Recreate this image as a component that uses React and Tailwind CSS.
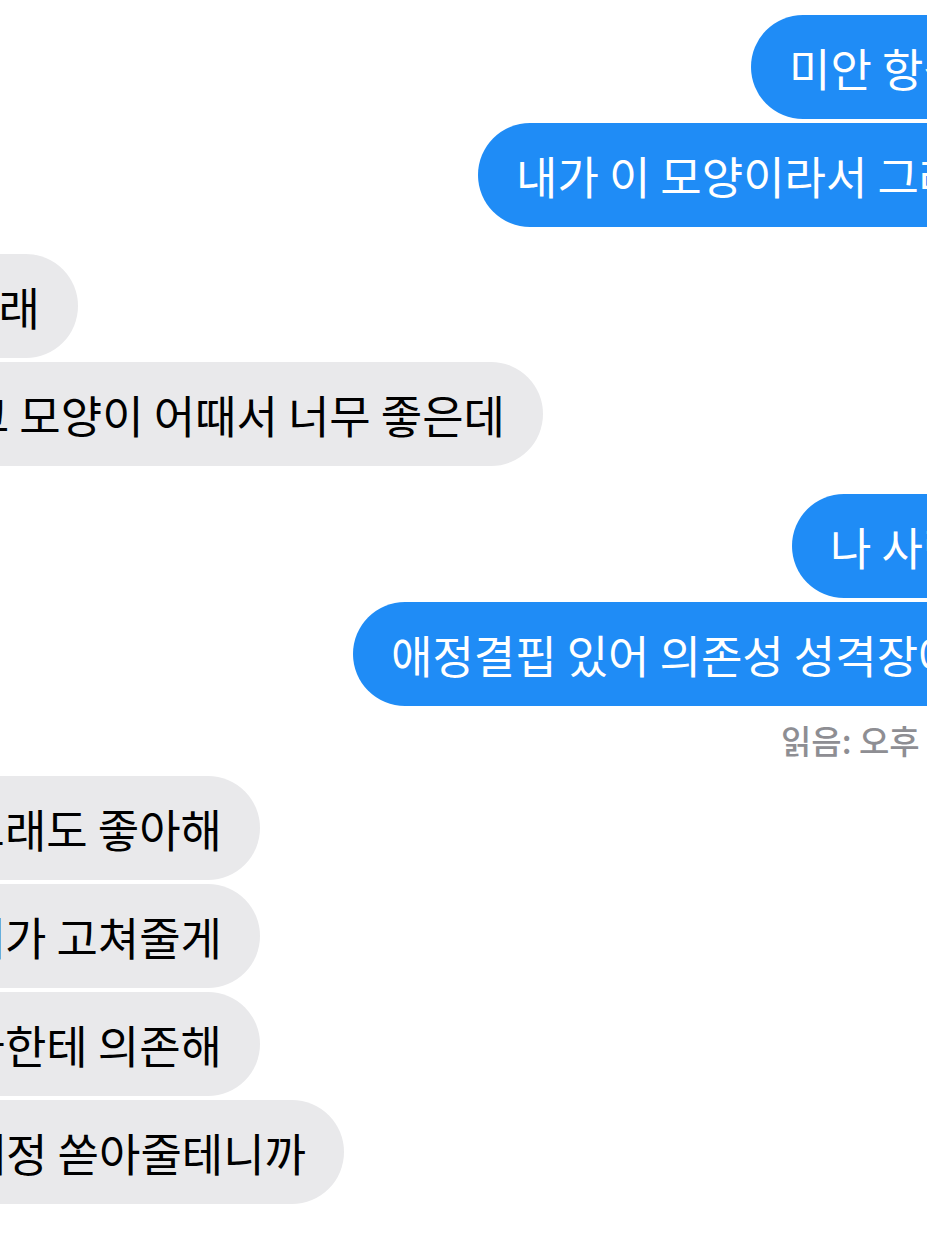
import React from "react";

const font = { fontFamily: '"Noto Sans CJK KR", "Noto Sans", sans-serif' };

function Right({ left, children }) {
  return (
    <div className="flex w-full" style={{ paddingLeft: left }}>
      <div className="h-[104px] shrink-0 rounded-full bg-[#1f8cf6] pl-[38px] pr-[80px] flex items-center whitespace-nowrap text-white text-[45px] font-normal leading-none">
        {children}
      </div>
    </div>
  );
}

function Left({ right, children }) {
  return (
    <div className="flex justify-end" style={{ width: right }}>
      <div className="h-[104px] shrink-0 rounded-full bg-[#e9e9eb] pr-[38px] pl-[80px] flex items-center whitespace-nowrap text-black text-[45px] font-normal leading-none">
        {children}
      </div>
    </div>
  );
}

export default function App() {
  return (
    <div className="w-[927px] h-[1236px] overflow-hidden bg-white pt-[15px]" style={font}>
      <div className="flex flex-col gap-[4px]">
        <Right left={751}>미안 항상</Right>
        <Right left={478}>내가 이 모양이라서 그래</Right>
      </div>
      <div className="flex flex-col gap-[4px] mt-[27px]">
        <Left right={78}>아니래</Left>
        <Left right={543}>그 모양이 어때서 너무 좋은데</Left>
      </div>
      <div className="flex flex-col gap-[4px] mt-[28px]">
        <Right left={792}>나 사랑해?</Right>
        <Right left={353}>애정결핍 있어 의존성 성격장애</Right>
      </div>
      <div className="h-[70px] flex items-center pl-[781px] whitespace-nowrap text-[33px] font-medium text-[#8e8e93]">
        읽음: 오후 11:42
      </div>
      <div className="flex flex-col gap-[4px]">
        <Left right={260}>그래도 좋아해</Left>
        <Left right={260}>내가 고쳐줄게</Left>
        <Left right={260}>나한테 의존해</Left>
        <Left right={344}>내가 애정 쏟아줄테니까</Left>
      </div>
    </div>
  );
}
